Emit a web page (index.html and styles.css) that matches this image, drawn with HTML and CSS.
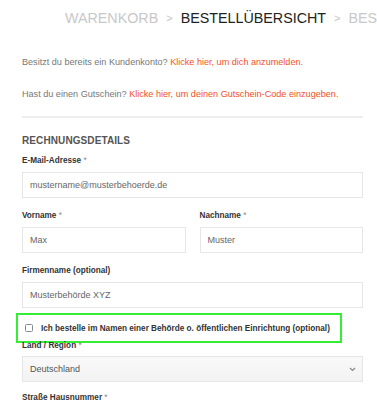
FILE: index.html
```html
<!DOCTYPE html>
<html lang="de">
<head>
<meta charset="utf-8">
<title>Bestellübersicht</title>
<link rel="stylesheet" href="styles.css">
</head>
<body>
<div class="steps">
  <span class="step">WARENKORB</span><span class="sep">&gt;</span><span class="step current">BESTELLÜBERSICHT</span><span class="sep">&gt;</span><span class="step">BESTELLUNG ABGESCHLOSSEN</span>
</div>
<div class="content">
  <p class="notice">Besitzt du bereits ein Kundenkonto? <a href="#" class="link">Klicke hier, um dich anzumelden.</a></p>
  <p class="notice notice-second">Hast du einen Gutschein? <a href="#" class="link">Klicke hier, um deinen Gutschein-Code einzugeben.</a></p>
  <div class="divider"></div>
  <h3 class="section-title">RECHNUNGSDETAILS</h3>
  <div class="field field-first">
    <label class="label">E-Mail-Adresse <span class="req">*</span></label>
    <div class="input">mustername@musterbehoerde.de</div>
  </div>
  <div class="row">
    <div class="field">
      <label class="label">Vorname <span class="req">*</span></label>
      <div class="input">Max</div>
    </div>
    <div class="field">
      <label class="label">Nachname <span class="req">*</span></label>
      <div class="input">Muster</div>
    </div>
  </div>
  <div class="field">
    <label class="label">Firmenname (optional)</label>
    <div class="input">Musterbehörde XYZ</div>
  </div>
  <div class="check-row">
    <span class="checkbox"></span>
    <span class="check-label">Ich bestelle im Namen einer Behörde o. öffentlichen Einrichtung (optional)</span>
  </div>
  <div class="field field-tight">
    <label class="label">Land / Region <span class="req">*</span></label>
    <div class="input select">
      <span>Deutschland</span>
      <svg class="chev" width="7" height="5" viewBox="0 0 7 5"><path d="M1 1 L3.5 3.5 L6 1" fill="none" stroke="#888" stroke-width="1.2"/></svg>
    </div>
  </div>
  <div class="field field-last">
    <label class="label">Straße Hausnummer <span class="req">*</span></label>
  </div>
</div>
</body>
</html>
```
FILE: styles.css
```css
html, body {
  margin: 0;
  padding: 0;
  background: #ffffff;
}
body {
  font-family: "Liberation Sans", Arial, sans-serif;
  color: #333;
  overflow: hidden;
}
.steps {
  height: 54px;
  box-sizing: border-box;
  padding: 10px 0 0 65px;
  font-size: 14.3px;
  line-height: 16px;
  white-space: nowrap;
  overflow: hidden;
  color: #c8c8c8;
}
.step.current {
  color: #222;
}
.sep {
  display: inline-block;
  font-size: 11px;
  padding: 0 8px;
  color: #c4c4c4;
  vertical-align: 1px;
}
.content {
  padding: 0 14px 0 22px;
}
.notice {
  margin: 0;
  font-size: 9.1px;
  line-height: 16px;
  color: #777;
}
.notice-second {
  margin-top: 16px;
}
.link {
  color: #f4511e;
  text-decoration: none;
}
.divider {
  margin-top: 14px;
  height: 2px;
  background: #eeeeee;
}
.section-title {
  margin: 16px 0 0;
  font-size: 10px;
  line-height: 14px;
  font-weight: bold;
  color: #555;
  letter-spacing: 0.1px;
}
.field {
  margin-top: 6px;
}
.field-first {
  margin-top: 7px;
}
.row .field {
  margin-top: 0;
}
.row {
  display: grid;
  grid-template-columns: 1fr 1fr;
  column-gap: 14px;
  margin-top: 12px;
}
.row + .field {
  margin-top: 12px;
}
.label {
  display: block;
  font-size: 8.2px;
  line-height: 12px;
  font-weight: bold;
  color: #333;
  margin-bottom: 5px;
}
.req {
  color: #888;
  font-weight: normal;
}
.input {
  height: 26px;
  box-sizing: border-box;
  border: 1px solid #e6e6e6;
  padding: 0 7px;
  font-size: 9px;
  line-height: 24px;
  color: #666;
  background: #fff;
}
.check-row {
  display: flex;
  align-items: center;
  margin: 5px 0 0 -6px;
  width: 326px;
  height: 30px;
  box-sizing: border-box;
  border: 2px solid #33ee33;
  padding-left: 7px;
}
.checkbox {
  width: 6px;
  height: 6px;
  border: 1px solid #8a8a8a;
  border-radius: 1.5px;
  background: #fff;
  flex: none;
}
.check-label {
  margin-left: 8px;
  font-size: 8.2px;
  font-weight: bold;
  color: #333;
  white-space: nowrap;
}
.field-tight {
  margin-top: -3px;
}
.field-tight .label {
  margin-bottom: 4px;
}
.field-last {
  margin-top: 10px;
}
.select {
  display: flex;
  align-items: center;
  justify-content: space-between;
  background: linear-gradient(#f9f9f9, #f3f3f3);
  color: #555;
  padding-right: 6px;
}
.chev {
  display: block;
}
```
